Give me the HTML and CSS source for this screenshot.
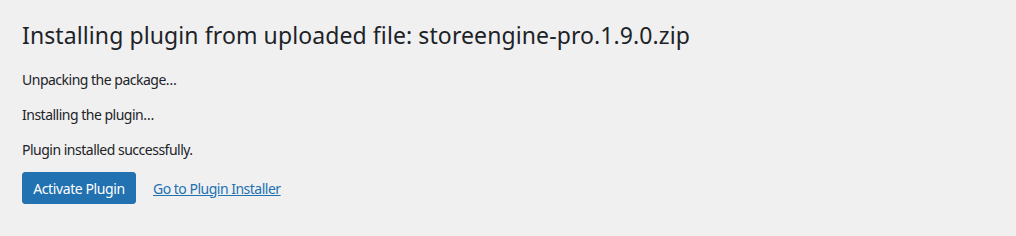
FILE: index.html
```html
<!DOCTYPE html>
<html lang="en">
<head>
<meta charset="utf-8">
<title>Install Plugin</title>
<link rel="stylesheet" href="styles.css">
</head>
<body>
<div class="wrap">
  <h1 class="title">Installing plugin from uploaded file: storeengine-pro.1.9.0.zip</h1>
  <p class="msg">Unpacking the package…</p>
  <p class="msg">Installing the plugin…</p>
  <p class="msg">Plugin installed successfully.</p>
  <div class="actions">
    <a class="button-primary" href="#">Activate Plugin</a>
    <a class="link" href="#">Go to Plugin Installer</a>
  </div>
</div>
</body>
</html>
```

FILE: styles.css
```css
html, body {
  margin: 0;
  padding: 0;
  background: #f0f0f1;
}
body {
  font-family: "Noto Sans", "Open Sans", sans-serif;
  color: #1d2327;
}
.wrap {
  padding: 11px 22px 0 22px;
}
.title {
  margin: 0;
  padding: 9px 0 4px;
  font-size: 23px;
  font-weight: 400;
  line-height: 30px;
  letter-spacing: 0.1px;
}
.msg {
  margin: 14px 0 0;
  font-size: 14px;
  line-height: 21px;
  letter-spacing: -0.5px;
}
.msg:first-of-type {
  margin-top: 15px;
}
.actions {
  display: flex;
  align-items: center;
  gap: 17px;
  margin-top: 12px;
}
.button-primary {
  display: inline-flex;
  align-items: center;
  justify-content: center;
  box-sizing: border-box;
  width: 114px;
  height: 32px;
  background: #2271b1;
  border: 1px solid #2271b1;
  border-radius: 3px;
  color: #fff;
  font-size: 14px;
  letter-spacing: -0.4px;
  text-decoration: none;
}
.link {
  color: #2271b1;
  font-size: 14px;
  letter-spacing: -0.5px;
  text-decoration: underline;
}
```
